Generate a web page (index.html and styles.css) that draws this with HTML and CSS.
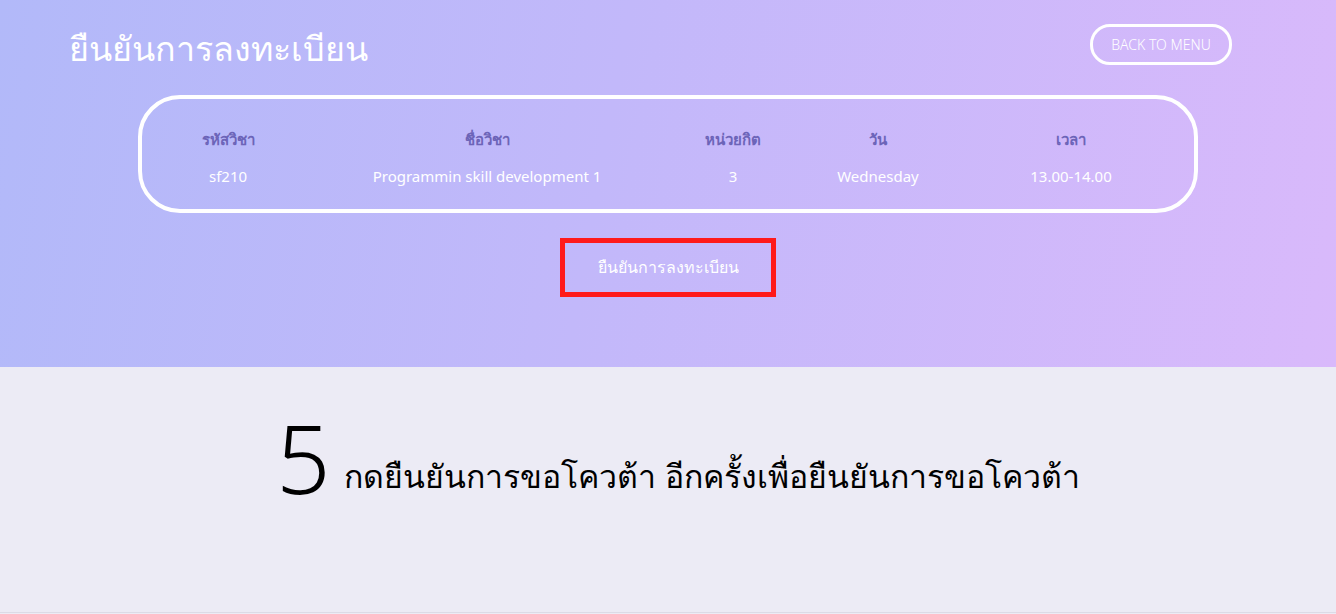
FILE: index.html
```html
<!DOCTYPE html>
<html lang="th">
<head>
<meta charset="utf-8">
<title>ยืนยันการลงทะเบียน</title>
<link rel="stylesheet" href="styles.css">
</head>
<body>
<section class="hero">
  <header class="topbar">
    <h1 class="title">ยืนยันการลงทะเบียน</h1>
    <a class="back-btn" href="#">BACK TO MENU</a>
  </header>
  <div class="card">
    <div class="grid">
      <div class="th">รหัสวิชา</div>
      <div class="th">ชื่อวิชา</div>
      <div class="th">หน่วยกิต</div>
      <div class="th">วัน</div>
      <div class="th">เวลา</div>
      <div class="td">sf210</div>
      <div class="td">Programmin skill development 1</div>
      <div class="td">3</div>
      <div class="td">Wednesday</div>
      <div class="td">13.00-14.00</div>
    </div>
  </div>
  <div class="confirm-wrap">
    <button class="confirm-btn">ยืนยันการลงทะเบียน</button>
  </div>
</section>
<section class="notice">
  <p class="notice-text"><span class="big">5</span><span class="msg">กดยืนยันการขอโควต้า อีกครั้งเพื่อยืนยันการขอโควต้า</span></p>
</section>
</body>
</html>
```

FILE: styles.css
```css
* { box-sizing: border-box; }
html, body { margin: 0; padding: 0; }
body {
  font-family: "Noto Sans", "Liberation Sans", sans-serif;
  background: #ecebf5;
  height: 614px;
  overflow: hidden;
}
.hero {
  height: 367px;
  background: linear-gradient(100deg, #b2b9f9 0%, #c2b8fa 45%, #d9b9fb 100%);
}
.topbar {
  display: flex;
  justify-content: space-between;
  align-items: flex-start;
  padding: 0 104px 0 69px;
}
.title {
  margin: 26px 0 0;
  font-size: 34px;
  font-weight: 400;
  color: #fff;
  line-height: 44px;
}
.back-btn {
  margin-top: 24px;
  width: 142px;
  height: 41px;
  border: 3px solid #fff;
  border-radius: 20px;
  color: #fff;
  font-size: 14px;
  font-weight: 300;
  text-decoration: none;
  display: flex;
  align-items: center;
  justify-content: center;
}
.card {
  margin: 25px 138px 0 138px;
  height: 118px;
  border: 4px solid #fff;
  border-radius: 42px;
  padding: 29px 0 0;
}
.grid {
  display: grid;
  grid-template-columns: 172px 346px 146px 144px 242px;
  row-gap: 14px;
}
.th, .td { text-align: center; font-size: 15px; }
.th { color: #6c64b8; font-weight: 700; }
.td { color: #fff; }
.confirm-wrap {
  display: flex;
  justify-content: center;
  margin-top: 25px;
}
.confirm-btn {
  width: 216px;
  height: 59px;
  border: 5px solid #ff1a1a;
  background: transparent;
  color: #fff;
  font-family: inherit;
  font-size: 16px;
}
.notice {
  height: 246px;
  display: flex;
  justify-content: center;
  padding-top: 28px;
  padding-left: 20px;
  border-bottom: 1px solid #dcdbe6;
}
.notice-text {
  margin: 0;
  font-size: 32px;
  font-weight: 300;
  color: #000;
  display: flex;
  align-items: flex-end;
  gap: 14px;
  height: 110px;
}
.big {
  font-size: 95px;
  font-weight: 300;
  line-height: 1;
}
.msg {
  line-height: 1;
  padding-bottom: 13px;
}
```
